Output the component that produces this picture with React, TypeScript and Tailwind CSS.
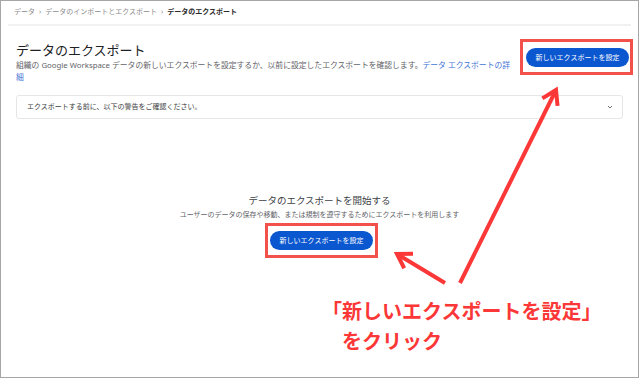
import React from "react";

const wing = (tx: number, ty: number, fx: number, fy: number, len: number, ang: number) => {
  const dx = fx - tx;
  const dy = fy - ty;
  const d = Math.hypot(dx, dy);
  const ux = dx / d;
  const uy = dy / d;
  const r = (ang * Math.PI) / 180;
  const p = (s: number) => {
    const c = Math.cos(s * r);
    const sn = Math.sin(s * r);
    return [tx + (ux * c - uy * sn) * len, ty + (ux * sn + uy * c) * len];
  };
  const a = p(1);
  const b = p(-1);
  return `M${a[0]},${a[1]} L${tx},${ty} L${b[0]},${b[1]}`;
};

function Arrows() {
  return (
    <svg className="absolute inset-0 pointer-events-none" width="640" height="379" viewBox="0 0 640 379">
      <g stroke="#fb3737" strokeWidth="4" fill="none" strokeLinecap="butt" strokeLinejoin="miter">
        <path d="M460,283 L556,90" />
        <path d={wing(556, 90, 460, 283, 16, 32)} />
        <path d="M445,283 L397,254" />
        <path d={wing(397, 254, 445, 283, 16, 32)} />
      </g>
    </svg>
  );
}

function BlueButton() {
  return (
    <div className="h-[19px] w-[103px] rounded-full bg-[#0b57d0] flex items-center justify-center text-white text-[7px] leading-none">
      新しいエクスポートを設定
    </div>
  );
}

export default function App() {
  return (
    <div
      className="relative w-[640px] h-[379px] bg-white overflow-hidden"
      style={{ fontFamily: '"Noto Sans", "Noto Sans CJK JP", sans-serif' }}
    >
      <div className="w-[639px] h-[378px] border border-[#a6a6a6] flex flex-col">
        {/* breadcrumb */}
        <div className="mx-[7px] h-[25px] border-b-2 border-[#f1f1f1] flex items-center px-[6px] text-[7px] text-[#8c8c8c] gap-[4px]">
          <span>データ</span>
          <span>›</span>
          <span>データのインポートとエクスポート</span>
          <span>›</span>
          <span className="font-bold text-[#2a2a2a]">データのエクスポート</span>
        </div>

        {/* header */}
        <div className="flex justify-between pl-[15px] pr-[5px]">
          <div className="pt-[15px]">
            <div className="text-[13px] leading-[18px] text-[#202124]">データのエクスポート</div>
            <div className="text-[7.8px] leading-[12px] text-[#5f6368]">
              組織の Google Workspace データの新しいエクスポートを設定するか、以前に設定したエクスポートを確認します。
              <span className="text-[#3f74d6]">データ エクスポートの詳</span>
              <br />
              <span className="text-[#3f74d6]">細</span>
            </div>
          </div>
          <div className="mt-[13px] self-start border-[3px] border-[#f2524b] pl-[3px] pr-[1px] pt-[6px] pb-[5px]">
            <BlueButton />
          </div>
        </div>

        {/* warning panel */}
        <div className="mx-[15px] mt-[12px] h-[24px] border border-[#e6e6e6] rounded-[3px] flex items-center justify-between pl-[10px] pr-[8px] text-[7px] text-[#3c4043]">
          <span>エクスポートする前に、以下の警告をご確認ください。</span>
          <svg width="8" height="8" viewBox="0 0 8 8">
            <path d="M2,3 L4,5 L6,3" stroke="#5f6368" strokeWidth="0.9" fill="none" />
          </svg>
        </div>

        {/* center */}
        <div className="flex flex-col items-center mt-[75px]">
          <div className="text-[9.5px] leading-[14px] text-[#3c4043]">データのエクスポートを開始する</div>
          <div className="text-[7px] leading-[12px] text-[#5f6368] mt-[1px]">
            ユーザーのデータの保存や移動、または規制を遵守するためにエクスポートを利用します
          </div>
          <div className="mt-[2px] border-[3px] border-[#f2524b] px-[2px] pt-[5px] pb-[5px] translate-x-[2px]">
            <BlueButton />
          </div>
        </div>
      </div>

      <Arrows />

      <div className="absolute left-[322px] top-[297px] text-[#fb3737] font-bold text-[20px] leading-[30px] whitespace-nowrap">
        <div>「新しいエクスポートを設定」</div>
        <div className="pl-[20px]">をクリック</div>
      </div>
    </div>
  );
}
